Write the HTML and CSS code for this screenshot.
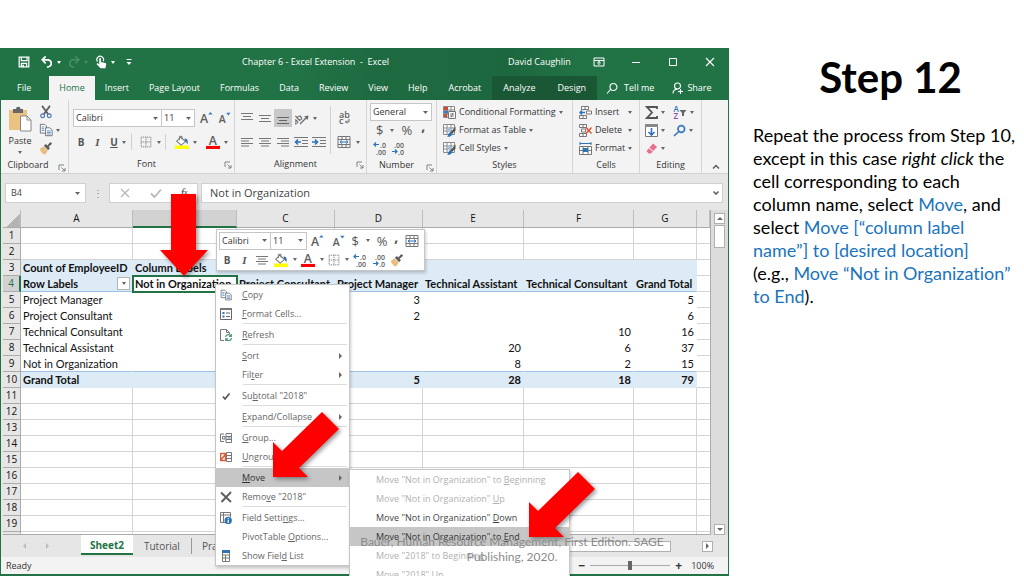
FILE: index.html
```html
<!DOCTYPE html>
<html lang="en">
<head>
<meta charset="utf-8">
<title>Step 12</title>
<link rel="stylesheet" href="styles.css">
</head>
<body>
<svg class="defs" aria-hidden="true">
  <symbol id="save" viewBox="0 0 16 16"><path d="M2.5 2.5h11v11h-11zM5 2.5v4h6.500v-4M5 13.500v-4h6v4" fill="none" stroke="#fff" stroke-width="1.400"/><path d="M6 11h2v3H6z" fill="#fff"/></symbol>
  <symbol id="undo" viewBox="0 0 16 16"><path d="M6.500 1.500L2.500 5.500l4 4M3 5.500h6.500a4 4 0 0 1 1 7.600L8 14" fill="none" stroke="#fff" stroke-width="1.900"/></symbol>
  <symbol id="redo" viewBox="0 0 16 16"><path d="M9.500 1.500l4 4-4 4M13 5.500H6.500a4 4 0 0 0-1 7.600L8 14" fill="none" stroke="#4b8f69" stroke-width="1.700"/></symbol>
  <symbol id="touch" viewBox="0 0 16 16"><path d="M4 7.500a3.800 3.800 0 1 1 6.500-.5" fill="none" stroke="#fff" stroke-width="1.300"/><path d="M6 4.500c0-1.500 2-1.500 2 0V8l5 1.200c1 .3 1 1 .8 2L13 15H7.500L3 10.500c0-1.500 1.500-1.500 3-.2z" fill="#fff"/></symbol>
  <symbol id="custom" viewBox="0 0 8 8"><path d="M1.500 1.500h5" stroke="#fff"/><path d="M1.500 4h5L4 7z" fill="#fff"/></symbol>
  <symbol id="ribbonopt" viewBox="0 0 12 12"><path d="M1 2h10v8H1zM1 4.500h10M6 9V5.500M4.200 7.200L6 5.500l1.800 1.700" fill="none" stroke="#fff"/></symbol>
  <symbol id="min" viewBox="0 0 12 12"><path d="M2 6.500h8" stroke="#fff"/></symbol>
  <symbol id="max" viewBox="0 0 12 12"><path d="M2.500 2.500h7v7h-7z" fill="none" stroke="#fff"/></symbol>
  <symbol id="close" viewBox="0 0 12 12"><path d="M2 2l8 8M10 2l-8 8" stroke="#fff" stroke-width="1.100"/></symbol>
  <symbol id="search" viewBox="0 0 12 12"><path d="M1 11.500L4.500 7.500M4 5a3.500 3.500 0 1 1 7 0a3.500 3.500 0 1 1-7 0" fill="none" stroke="#fff" stroke-width="1.100"/></symbol>
  <symbol id="person" viewBox="0 0 12 12"><path d="M2.500 4a3 3 0 1 1 6 0a3 3 0 1 1-6 0M1 11.500c0-3 2-4.300 4.500-4.300M6 9.500h5M8.500 7v5" fill="none" stroke="#fff" stroke-width="1.100"/></symbol>

  <symbol id="paste" viewBox="0 0 24 26"><path d="M1 4h18v20H1z" fill="#eac282"/><path d="M5 3h3a2 2 0 0 1 4.500 0H15v4H5z" fill="#666"/><path d="M12.500 10h6.500l4 4v11h-10.500z" fill="#fff" stroke="#888"/><path d="M19 10v4h4" fill="none" stroke="#888"/></symbol>
  <symbol id="cut" viewBox="0 0 16 16"><path d="M3.500 1l7 9.500M12.500 1l-7 9.500" stroke="#5e5e5e" stroke-width="2"/><path d="M2 12.300a2.200 2.200 0 1 1 4.400 0a2.200 2.200 0 1 1-4.400 0M9.500 12.300a2.200 2.200 0 1 1 4.400 0a2.200 2.200 0 1 1-4.400 0" fill="none" stroke="#4472b0" stroke-width="1.300"/></symbol>
  <symbol id="copy" viewBox="0 0 16 16"><path d="M1.500 1.500h5l2 2v8h-7z" fill="#fff" stroke="#666"/><path d="M7.500 5.500h5l2.500 2.500v6.500H7.500z" fill="#fff" stroke="#666"/><path d="M3 4.500h3M3 6.500h3M3 8.500h3M9 9h4.500M9 10.800h4.500M9 12.600h4.500" stroke="#4a83bd"/></symbol>
  <symbol id="painter" viewBox="0 0 16 16"><path d="M1 9l4-3 5 5-3 4.500c-2 0-5-2.500-6-6.500z" fill="#e9bd7c"/><path d="M5.500 5.500L8 3.500l1.500 1.500L13 1l2 2-4 3.500L12.500 8l-2 2.500z" fill="#5e5e5e"/></symbol>
  <symbol id="grow" viewBox="0 0 16 16"><text x="1" y="14" class="glyph" font-size="14">A</text><path d="M10.500 4h5L13 1z" fill="#3b78bd"/></symbol>
  <symbol id="shrink" viewBox="0 0 16 16"><text x="2" y="14" class="glyph" font-size="12">A</text><path d="M10.500 2h5L13 5z" fill="#3b78bd"/></symbol>
  <symbol id="borders" viewBox="0 0 16 16"><path d="M1.500 1.500h13v13h-13zM8 1.500v13M1.500 8h13" fill="none" stroke="#777" stroke-width="1.200" stroke-dasharray="1.500 1"/></symbol>
  <symbol id="fill" viewBox="0 0 16 16"><path d="M0 12h16v4H0z" fill="#ff0"/><path d="M6.500 2.500l5.500 5-5 4-5-4.500z" fill="#fff" stroke="#777" stroke-width="1.200"/><path d="M5 6V1.500h3V5" fill="none" stroke="#777"/><path d="M11 4c3 0 4 2 3.500 6-2 0-1.500-3-3.500-4z" fill="#3f6fa8"/></symbol>
  <symbol id="fcolor" viewBox="0 0 16 16"><path d="M0 12.500h16V16H0z" fill="#f00"/><text x="3.200" y="11.500" class="glyph" font-size="14">A</text></symbol>
  <symbol id="atop" viewBox="0 0 12 12"><path d="M0 1.500h12M2 4.500h8M0 7.500h12" stroke="#777"/></symbol>
  <symbol id="amid" viewBox="0 0 12 12"><path d="M0 3.500h12M2 6.500h8M0 9.500h12" stroke="#777"/></symbol>
  <symbol id="abot" viewBox="0 0 12 12"><path d="M0 5.500h12M2 8.500h8M0 11.500h12" stroke="#666"/></symbol>
  <symbol id="aleft" viewBox="0 0 12 12"><path d="M0 2.500h12M0 5h8M0 7.500h12M0 10h8" stroke="#777"/></symbol>
  <symbol id="acen" viewBox="0 0 12 12"><path d="M0 2.500h12M2 5h8M0 7.500h12M2 10h8" stroke="#777"/></symbol>
  <symbol id="aright" viewBox="0 0 12 12"><path d="M0 2.500h12M4 5h8M0 7.500h12M4 10h8" stroke="#777"/></symbol>
  <symbol id="orient" viewBox="0 0 14 14"><text x="-3" y="10" transform="rotate(-42 4 8)" class="glyph" font-size="9">ab</text><path d="M5 13l8-8M13 5l-3.500 1M13 5l-1 3.500" fill="none" stroke="#666" stroke-width="1.200"/></symbol>
  <symbol id="outdent" viewBox="0 0 14 12"><path d="M0 1.500h14M8 4.500h6M8 7.500h6M0 10.500h14" stroke="#777"/><path d="M7 6H1.500M4 3.500L1.500 6 4 8.500" fill="none" stroke="#2f73b7" stroke-width="1.600"/></symbol>
  <symbol id="indent" viewBox="0 0 14 12"><path d="M0 1.500h14M8 4.500h6M8 7.500h6M0 10.500h14" stroke="#777"/><path d="M0 6h5.500M3 3.500L5.500 6 3 8.500" fill="none" stroke="#2f73b7" stroke-width="1.600"/></symbol>
  <symbol id="wrap" viewBox="0 0 12 14"><text x="1" y="7" class="glyph" font-size="9">ab</text><text x="1" y="13" class="glyph" font-size="9">c</text><path d="M11 8v3H7.500M9 9.500L7.500 11 9 12.500" fill="none" stroke="#666"/></symbol>
  <symbol id="merge" viewBox="0 0 14 14"><path d="M1 1.500h12v11H1zM1 4.500h12M1 9.500h12M5 1.500v3M9 1.500v3M5 9.500v3M9 9.500v3" fill="none" stroke="#777"/><path d="M3 7h8M5 5.500L3 7l2 1.500M9 5.500L11 7 9 8.500" fill="none" stroke="#2f73b7"/></symbol>
  <symbol id="incdec" viewBox="0 0 14 14"><path d="M6 3.500H1M3 1.500l-2 2 2 2" fill="none" stroke="#2f73b7" stroke-width="1.200"/><text x="7" y="6.500" class="glyph" font-size="7">.0</text><text x="3" y="13.500" class="glyph" font-size="7">.00</text></symbol>
  <symbol id="decdec" viewBox="0 0 14 14"><text x="3" y="6.500" class="glyph" font-size="7">.00</text><path d="M1 10.500h5M4 8.500l2 2-2 2" fill="none" stroke="#2f73b7" stroke-width="1.200"/><text x="7" y="13.500" class="glyph" font-size="7">.0</text></symbol>
  <symbol id="cond" viewBox="0 0 13 13"><path d="M.5.5h11v11H.5zM.5 4h11M.5 8h11M4 .5v11M8 .5v11" fill="#fff" stroke="#888"/><path d="M1 1h4v3H1zM1 8h3v3H1z" fill="#d0492f"/><path d="M1 4.500h4v3H1z" fill="#3f77b5"/><path d="M5.500 5.500h7v7h-7z" fill="#fff" stroke="#777"/><path d="M7 8h4M7 10h4M10 7l-2 4.500" stroke="#666" stroke-width=".8"/></symbol>
  <symbol id="tfmt" viewBox="0 0 13 13"><path d="M.5.5h11v10H.5zM.5 4h11M.5 7h11M4 .5v10M8 .5v10" fill="#fff" stroke="#888"/><path d="M4 4.500h4V7H4z" fill="#9dc3e6"/><path d="M12.500 2.500v4L9 10 7.500 8.500z" fill="#555"/><path d="M7.500 8L9.500 10c-1 2.500-3 3-5.500 2.800C5.500 11.500 5 9 7.500 8z" fill="#2f73b7"/></symbol>
  <symbol id="cins" viewBox="0 0 13 13"><path d="M2.500.5h7v3h-7zM.5 9.500h7v3h-7zM6 .5v3M4 9.500v3M7.500 5h5v3h-5z" fill="#fff" stroke="#777"/><path d="M6 6.500H1M3 4.500l-2 2 2 2" fill="none" stroke="#2f73b7" stroke-width="1.500"/></symbol>
  <symbol id="cdel" viewBox="0 0 13 13"><path d="M.5.5h7v3h-7zM.5 9.500h7v3h-7zM4 .5v3M4 9.500v3M2.500 5h4v3h-4z" fill="#fff" stroke="#777"/><path d="M7 3.500l5.500 6M12.500 3.500L7 9.500" stroke="#dc5032" stroke-width="1.500"/></symbol>
  <symbol id="cfmt" viewBox="0 0 13 13"><path d="M1 0v3M12 0v3M1 1.500h11" stroke="#2f73b7"/><path d="M.5 4.500h12v8H.5zM.5 8.500h12M4 4.500v8M9 4.500v8" fill="#fff" stroke="#777"/><path d="M4 6h5v4H4z" fill="#2f73b7"/></symbol>
  <symbol id="sum" viewBox="0 0 13 13"><path d="M12 3V1H2l5 5.500L2 12h10v-2" fill="none" stroke="#555" stroke-width="1.800"/></symbol>
  <symbol id="sortf" viewBox="0 0 13 14"><text x="0" y="7" font-size="8" class="glyph blue">A</text><text x="0" y="14" font-size="8" class="glyph purple">Z</text><path d="M6 5h7l-2.500 3v3h-2V8z" fill="#666"/></symbol>
  <symbol id="filld" viewBox="0 0 13 13"><path d="M.5.5h12v12H.5z" fill="#fff" stroke="#777"/><path d="M0 0h13v3H0z" fill="#888"/><path d="M6.500 4v7M3.500 8l3 3 3-3" fill="none" stroke="#2f73b7" stroke-width="1.600"/></symbol>
  <symbol id="find" viewBox="0 0 13 13"><path d="M5 5a3.300 3.300 0 1 1 6.600 0a3.300 3.300 0 1 1-6.600 0M5.800 7.500L1 12" fill="none" stroke="#3b78bd" stroke-width="1.700"/></symbol>
  <symbol id="erase" viewBox="0 0 13 13"><path d="M8 1.500L12 5 6 11.500H3.500L1.500 9z" fill="#e8708c"/><path d="M4 6l4.500 3.500" stroke="#fff"/></symbol>
  <symbol id="launch" viewBox="0 0 8 8"><path d="M1 6V1h5M3.500 3.500L7 7M7 4v3H4" fill="none" stroke="#777" stroke-width=".9"/></symbol>
  <symbol id="up" viewBox="0 0 8 8"><path d="M1 5.500l3-3 3 3" fill="none" stroke="#555" stroke-width="1.400"/></symbol>
  <symbol id="down" viewBox="0 0 8 8"><path d="M1.500 2.500L4 5l2.500-2.500" fill="none" stroke="#666" stroke-width="1.700"/></symbol>
  <symbol id="xgray" viewBox="0 0 12 12"><path d="M2 2l8 8M10 2l-8 8" stroke="#b8b8b8" stroke-width="1.400"/></symbol>
  <symbol id="ckgray" viewBox="0 0 12 12"><path d="M1 6.500L4.500 10 11 2.500" fill="none" stroke="#b8b8b8" stroke-width="1.800"/></symbol>
  <symbol id="check" viewBox="0 0 12 12"><path d="M3 6.500L5 9l4.500-5.500" fill="none" stroke="#555" stroke-width="1.700"/></symbol>
  <symbol id="dlg" viewBox="0 0 12 12"><path d="M.5.500h11v11H.5z" fill="#fff" stroke="#666"/><path d="M0 0h12v2H0z" fill="#777"/><path d="M2.500 5h2M2.500 8.500h2" stroke="#2f73b7" stroke-width="2"/><path d="M6 5h4M6 8.500h4" stroke="#666"/></symbol>
  <symbol id="refresh" viewBox="0 0 12 12"><path d="M4 11.500H.5V.500h6l3 3V5M6.500.500v3h3" fill="none" stroke="#777"/><path d="M5.500 8a3 3 0 0 1 5.500-1M11.500 9a3 3 0 0 1-5.500 1.300M11.300 5v2.300H9M5.700 12V9.800H8" fill="none" stroke="#4f9a72" stroke-width="1.200"/></symbol>
  <symbol id="group" viewBox="0 0 12 12"><path d="M4 2H.5v7.500H4M6 1.500h5.500v9H6zM6 4.500h5.500M6 7.500h5.500" fill="#fff" stroke="#777"/><path d="M2.500 4.500h2.500v2.500H2.500z" fill="#fff" stroke="#777"/><path d="M7.500 6h3" stroke="#2f73b7"/></symbol>
  <symbol id="ungroup" viewBox="0 0 12 12"><path d="M6.500 1.500h5v9h-5zM6.500 4.500h5M6.500 7.500h5" fill="#fff" stroke="#777"/><path d="M.7 2.500h4.800v7H.7zM1 9l4.500-6" fill="#fff" stroke="#d8603d" stroke-width="1.400"/></symbol>
  <symbol id="remove" viewBox="0 0 12 12"><path d="M1 1.500l10 9.500M11 1L1.500 11" stroke="#5e5e5e" stroke-width="1.900"/></symbol>
  <symbol id="fset" viewBox="0 0 12 12"><path d="M5 10.500H.5V.500h10V5M.5 3h10M3.500 .5v10" fill="#fff" stroke="#777"/><path d="M4.500 8.500a3.700 3.700 0 1 1 7.400 0a3.700 3.700 0 1 1-7.400 0" fill="#2f73b7"/><path d="M8.200 6v1.200M8.200 8v3" stroke="#fff" stroke-width="1.200"/></symbol>
  <symbol id="flist" viewBox="0 0 12 12"><path d="M2.500.500h7v11h-7zM2.500 5h7M2.500 8h7M5.500 5v6" fill="#fff" stroke="#777"/><path d="M2 0h8v3H2z" fill="#2f73b7"/></symbol>
</svg>

<div class="slide">
  <section class="excel">
    <header class="head">
      <div class="titlebar">
        <div class="quick">
          <button aria-label="Save"><svg class="i14"><use href="#save"/></svg></button>
          <button aria-label="Undo"><svg class="i14"><use href="#undo"/></svg><i class="caret light"></i></button>
          <button aria-label="Redo"><svg class="i14"><use href="#redo"/></svg><i class="caret dim"></i></button>
          <button aria-label="Touch mode"><svg class="i14"><use href="#touch"/></svg><i class="caret light"></i></button>
          <button aria-label="Customize"><svg class="i8"><use href="#custom"/></svg></button>
        </div>
        <div class="doc">Chapter 6 - Excel Extension&nbsp; -&nbsp; Excel</div>
        <div class="user">David Caughlin</div>
        <div class="wins">
          <button aria-label="Ribbon options"><svg class="i12"><use href="#ribbonopt"/></svg></button>
          <button aria-label="Minimize"><svg class="i12"><use href="#min"/></svg></button>
          <button aria-label="Maximize"><svg class="i12"><use href="#max"/></svg></button>
          <button aria-label="Close"><svg class="i12"><use href="#close"/></svg></button>
        </div>
      </div>
      <nav class="tabs">
        <button class="file">File</button><button class="on">Home</button><button>Insert</button><button>Page Layout</button><button>Formulas</button><button>Data</button><button>Review</button><button>View</button><button>Help</button><button class="loose">Acrobat</button><span class="context"><button class="loose">Analyze</button><button class="loose">Design</button></span>
        <button class="tell"><svg class="i12"><use href="#search"/></svg>Tell me</button>
        <button class="share"><svg class="i12"><use href="#person"/></svg>Share</button>
      </nav>
    </header>

    <div class="ribbon">
      <div class="grp clip">
        <div class="body cols">
          <button class="big"><svg class="pasteicon"><use href="#paste"/></svg>Paste<i class="caret"></i></button>
          <div class="three">
            <button aria-label="Cut"><svg class="i14"><use href="#cut"/></svg></button>
            <button aria-label="Copy"><svg class="i14"><use href="#copy"/></svg><i class="caret"></i></button>
            <button aria-label="Format Painter"><svg class="i14"><use href="#painter"/></svg></button>
          </div>
        </div>
        <div class="label">Clipboard<svg class="i8"><use href="#launch"/></svg></div>
      </div>
      <div class="grp font">
        <div class="body two">
          <div class="row">
            <div class="joined"><select class="name" aria-label="Font"><option>Calibri</option></select><select class="size" aria-label="Font size"><option>11</option></select></div>
            <button aria-label="Grow font"><svg class="i14"><use href="#grow"/></svg></button>
            <button aria-label="Shrink font"><svg class="i14"><use href="#shrink"/></svg></button>
          </div>
          <div class="row spread">
            <button class="b">B</button><button class="it">I</button><button class="un">U</button><i class="caret"></i><i class="bar"></i>
            <button aria-label="Borders"><svg class="i12"><use href="#borders"/></svg></button><i class="caret"></i><i class="bar"></i>
            <button aria-label="Fill color"><svg class="i14"><use href="#fill"/></svg></button><i class="caret"></i>
            <button aria-label="Font color"><svg class="i14"><use href="#fcolor"/></svg></button><i class="caret"></i>
          </div>
        </div>
        <div class="label launched">Font<svg class="i8"><use href="#launch"/></svg></div>
      </div>
      <div class="grp align">
        <div class="body cols">
          <div class="agrid">
            <button aria-label="Top"><svg class="i12"><use href="#atop"/></svg></button>
            <button aria-label="Middle"><svg class="i12"><use href="#amid"/></svg></button>
            <button aria-label="Bottom" class="sel"><svg class="i12"><use href="#abot"/></svg></button>
            <button aria-label="Orientation" class="wide"><svg class="i14"><use href="#orient"/></svg><i class="caret"></i></button>
            <button aria-label="Left"><svg class="i12"><use href="#aleft"/></svg></button>
            <button aria-label="Center"><svg class="i12"><use href="#acen"/></svg></button>
            <button aria-label="Right"><svg class="i12"><use href="#aright"/></svg></button>
            <button aria-label="Decrease indent"><svg class="i14"><use href="#outdent"/></svg></button>
            <button aria-label="Increase indent"><svg class="i14"><use href="#indent"/></svg></button>
          </div>
          <div class="wrapcol">
            <button aria-label="Wrap text"><svg class="i14"><use href="#wrap"/></svg></button>
            <button aria-label="Merge"><svg class="i14"><use href="#merge"/></svg><i class="caret"></i></button>
          </div>
        </div>
        <div class="label launched">Alignment<svg class="i8"><use href="#launch"/></svg></div>
      </div>
      <div class="grp number">
        <div class="body three">
          <select class="general" aria-label="Number format"><option>General</option></select>
          <div class="row nums"><button class="sym">$</button><i class="caret"></i><button class="sym">%</button><button class="comma">,</button></div>
          <div class="row nums decs"><button aria-label="Increase decimal"><svg class="i14"><use href="#incdec"/></svg></button><button aria-label="Decrease decimal"><svg class="i14"><use href="#decdec"/></svg></button></div>
        </div>
        <div class="label launched">Number<svg class="i8"><use href="#launch"/></svg></div>
      </div>
      <div class="grp styles">
        <div class="body three">
          <button><svg class="i13"><use href="#cond"/></svg>Conditional Formatting<i class="caret"></i></button>
          <button><svg class="i13"><use href="#tfmt"/></svg>Format as Table<i class="caret"></i></button>
          <button><svg class="i13"><use href="#tfmt"/></svg>Cell Styles<i class="caret"></i></button>
        </div>
        <div class="label">Styles</div>
      </div>
      <div class="grp cells">
        <div class="body three">
          <button><svg class="i13"><use href="#cins"/></svg>Insert<i class="caret end"></i></button>
          <button><svg class="i13"><use href="#cdel"/></svg>Delete<i class="caret end"></i></button>
          <button><svg class="i13"><use href="#cfmt"/></svg>Format<i class="caret end"></i></button>
        </div>
        <div class="label">Cells</div>
      </div>
      <div class="grp editing">
        <div class="body egrid">
          <button aria-label="Sum"><svg class="i13"><use href="#sum"/></svg><i class="caret"></i></button>
          <button aria-label="Sort"><svg class="i14"><use href="#sortf"/></svg><i class="caret"></i></button>
          <button aria-label="Fill"><svg class="i13"><use href="#filld"/></svg><i class="caret"></i></button>
          <button aria-label="Find"><svg class="i13"><use href="#find"/></svg><i class="caret"></i></button>
          <button aria-label="Clear"><svg class="i13"><use href="#erase"/></svg><i class="caret"></i></button>
        </div>
        <div class="label">Editing</div>
      </div>
      <button class="collapse" aria-label="Collapse"><svg class="i8"><use href="#up"/></svg></button>
    </div>

    <div class="formula">
      <select class="namebox" aria-label="Name box"><option>B4</option></select>
      <span class="dots">⋮</span>
      <div class="fx"><button aria-label="Cancel"><svg class="i12"><use href="#xgray"/></svg></button><button aria-label="Enter"><svg class="i12"><use href="#ckgray"/></svg></button><button class="f">f<sub>x</sub></button></div>
      <label class="value"><input aria-label="Formula" value="Not in Organization"><svg class="i8"><use href="#down"/></svg></label>
    </div>

    <div class="sheet">
      <div class="view">
        <table>
          <colgroup><col class="c0"><col class="ca"><col class="cb"><col class="cc"><col class="cd"><col class="ce"><col class="cf"><col class="cg"><col></colgroup>
          <thead><tr><th class="corner"></th><th>A</th><th class="act"></th><th>C</th><th>D</th><th>E</th><th>F</th><th>G</th><th></th></tr></thead>
          <tbody>
            <tr><th>1</th><td></td><td></td><td></td><td></td><td></td><td></td><td></td><td></td></tr>
            <tr><th>2</th><td></td><td></td><td></td><td></td><td></td><td></td><td></td><td></td></tr>
            <tr class="hd"><th>3</th><td>Count of EmployeeID</td><td>Column Labels</td><td></td><td></td><td></td><td></td><td></td><td></td></tr>
            <tr class="hd line"><th class="act">4</th><td><span class="lab">Row Labels<button aria-label="Filter rows"><i class="caret"></i></button></span></td><td class="cur">Not in Organization</td><td>Project Consultant</td><td>Project Manager</td><td>Technical Assistant</td><td>Technical Consultant</td><td>Grand Total</td><td></td></tr>
            <tr class="pv"><th>5</th><td>Project Manager</td><td></td><td></td><td>3</td><td></td><td></td><td>5</td><td></td></tr>
            <tr class="pv"><th>6</th><td>Project Consultant</td><td></td><td></td><td>2</td><td></td><td></td><td>6</td><td></td></tr>
            <tr class="pv"><th>7</th><td>Technical Consultant</td><td></td><td></td><td></td><td></td><td>10</td><td>16</td><td></td></tr>
            <tr class="pv"><th>8</th><td>Technical Assistant</td><td></td><td></td><td></td><td>20</td><td>6</td><td>37</td><td></td></tr>
            <tr class="pv last"><th>9</th><td>Not in Organization</td><td></td><td></td><td></td><td>8</td><td>2</td><td>15</td><td></td></tr>
            <tr class="hd pv"><th>10</th><td>Grand Total</td><td></td><td></td><td>5</td><td>28</td><td>18</td><td>79</td><td></td></tr>
            <tr><th>11</th><td></td><td></td><td></td><td></td><td></td><td></td><td></td><td></td></tr>
            <tr><th>12</th><td></td><td></td><td></td><td></td><td></td><td></td><td></td><td></td></tr>
            <tr><th>13</th><td></td><td></td><td></td><td></td><td></td><td></td><td></td><td></td></tr>
            <tr><th>14</th><td></td><td></td><td></td><td></td><td></td><td></td><td></td><td></td></tr>
            <tr><th>15</th><td></td><td></td><td></td><td></td><td></td><td></td><td></td><td></td></tr>
            <tr><th>16</th><td></td><td></td><td></td><td></td><td></td><td></td><td></td><td></td></tr>
            <tr><th>17</th><td></td><td></td><td></td><td></td><td></td><td></td><td></td><td></td></tr>
            <tr><th>18</th><td></td><td></td><td></td><td></td><td></td><td></td><td></td><td></td></tr>
            <tr><th>19</th><td></td><td></td><td></td><td></td><td></td><td></td><td></td><td></td></tr>
            <tr><th></th><td></td><td></td><td></td><td></td><td></td><td></td><td></td><td></td></tr>
          </tbody>
        </table>
      </div>
      <div class="vscroll"><button aria-label="Scroll up"><i class="tri u"></i></button><div class="thumb"></div><button class="bottom" aria-label="Scroll down"><i class="tri d"></i></button></div>
    </div>

    <div class="sheets">
      <span class="arrows"><i class="tri l"></i><i class="tri r"></i></span>
      <button class="on">Sheet2</button><button>Tutorial</button><button class="split">Practice</button>
      <div class="hscroll"><div class="hthumb"></div><button aria-label="Scroll right"><i class="tri r"></i></button></div>
    </div>
    <footer class="status"><span>Ready</span><span class="zoom"><i class="bracket"></i><b>−</b><input type="range" aria-label="Zoom" value="50"><b>+</b><span>100%</span></span></footer>

    <div class="mini">
      <div class="row">
        <div class="joined"><select class="name" aria-label="Font"><option>Calibri</option></select><select class="size" aria-label="Font size"><option>11</option></select></div>
        <div class="row fillrow">
        <button aria-label="Grow font"><svg class="i14"><use href="#grow"/></svg></button><button aria-label="Shrink font"><svg class="i14"><use href="#shrink"/></svg></button>
        <button class="sym">$</button><i class="caret"></i><button class="sym">%</button><button class="comma">,</button><button aria-label="Merge"><svg class="i14"><use href="#merge"/></svg></button>
        </div>
      </div>
      <div class="row second">
        <button class="b">B</button><button class="it">I</button><button class="center" aria-label="Center"><svg class="i12"><use href="#acen"/></svg></button>
        <button aria-label="Fill color"><svg class="i14"><use href="#fill"/></svg></button><i class="caret"></i><button aria-label="Font color"><svg class="i14"><use href="#fcolor"/></svg></button><i class="caret"></i><button aria-label="Borders"><svg class="i12"><use href="#borders"/></svg></button><i class="caret"></i>
        <button aria-label="Increase decimal"><svg class="i14"><use href="#incdec"/></svg></button><button aria-label="Decrease decimal"><svg class="i14"><use href="#decdec"/></svg></button><button aria-label="Format Painter"><svg class="i14"><use href="#painter"/></svg></button>
      </div>
    </div>

    <ul class="menu">
      <li><svg class="i12"><use href="#copy"/></svg><span><u>C</u>opy</span></li>
      <li class="sep"><svg class="i12"><use href="#dlg"/></svg><span><u>F</u>ormat Cells...</span></li>
      <li class="sep"><svg class="i12"><use href="#refresh"/></svg><span><u>R</u>efresh</span></li>
      <li><i></i><span><u>S</u>ort</span><i class="tri r"></i></li>
      <li class="sep"><i></i><span>Fil<u>t</u>er</span><i class="tri r"></i></li>
      <li class="sep"><svg class="i12"><use href="#check"/></svg><span>Su<u>b</u>total "2018"</span></li>
      <li class="sep"><i></i><span><u>E</u>xpand/Collapse</span><i class="tri r"></i></li>
      <li><svg class="i12"><use href="#group"/></svg><span><u>G</u>roup...</span></li>
      <li class="sep"><svg class="i12"><use href="#ungroup"/></svg><span><u>U</u>ngroup...</span></li>
      <li class="hot"><i></i><span><u>M</u>ove</span><i class="tri r"></i>
        <ul class="sub">
          <li class="off">Move "Not in Organization" to <u>B</u>eginning</li>
          <li class="off">Move "Not in Organization" <u>U</u>p</li>
          <li>Move "Not in Organization" <u>D</u>own</li>
          <li class="hot">Move "Not in Organization" to <u>E</u>nd</li>
          <li class="off">Move "2018" to Beginning</li>
          <li class="off">Move "2018" Up</li>
        </ul>
      </li>
      <li class="sep"><svg class="i12"><use href="#remove"/></svg><span>Remo<u>v</u>e "2018"</span></li>
      <li><svg class="i12"><use href="#fset"/></svg><span>Field Setti<u>n</u>gs...</span></li>
      <li><i></i><span>PivotTable <u>O</u>ptions...</span></li>
      <li><svg class="i12"><use href="#flist"/></svg><span>Show Fiel<u>d</u> List</span></li>
    </ul>

    <svg class="arrow a1" viewBox="0 0 48 82"><path d="M11 0h25v56h12L24 82 0 56h11z"/></svg>
    <svg class="arrow a2" viewBox="0 0 66 66"><path d="M0 65V30l9 9L49 0l17 17-40 39 9 9z"/></svg>
    <svg class="arrow a3" viewBox="0 0 66 66"><path d="M0 65V30l9 9L49 0l17 17-40 39 9 9z"/></svg>
  </section>

  <aside class="text">
    <h1>Step 12</h1>
    <p>Repeat the process from Step 10,<br>except in this case <em>right click</em> the<br>cell corresponding to each<br>column name, select <b>Move</b>, and<br>select <b>Move [“column label<br>name”] to [desired location]</b><br>(e.g., <b>Move “Not in Organization”<br>to End</b>).</p>
  </aside>
  <p class="cite">Bauer, Human Resource Management, First Edition. SAGE<br>Publishing, 2020.</p>
</div>
</body>
</html>
```
FILE: styles.css
```css
* { box-sizing: border-box; }
body { margin: 0; background: #fff; font: 9px/14px "Open Sans", "Noto Sans", sans-serif; font-variant-ligatures: none; color: #333; overflow: hidden; }
.defs { position: absolute; width: 0; height: 0; }
button, select, input { font: inherit; color: inherit; border: 0; background: none; padding: 0; margin: 0; border-radius: 0; }
button { display: inline-flex; align-items: center; justify-content: center; }
svg { display: block; flex: none; }
.i8 { width: 8px; height: 8px; }
.i12 { width: 12px; height: 12px; }
.i13 { width: 13px; height: 13px; }
.i14 { width: 14px; height: 14px; }
.pasteicon { width: 24px; height: 26px; }
.glyph { font-family: "Open Sans", sans-serif; font-weight: 600; fill: #5e5e5e; }
.glyph.blue { fill: #2f73b7; }
.glyph.purple { fill: #8c4fa8; }
.caret { display: inline-block; flex: none; border: 2px solid transparent; border-top: 3px solid #666; border-bottom: 0; }
.caret.light { border-top-color: #fff; }
.caret.dim { border-top-color: #4b8f69; }
.tri { flex: none; border: 3px solid transparent; }
.tri.u { border-bottom-color: #666; border-top: 0; }
.tri.d { border-top-color: #666; border-bottom: 0; }
.tri.l { border-right-color: #bbb; border-left: 0; }
.tri.r { border-left-color: #666; border-right: 0; }
.row { display: flex; align-items: center; }

.slide { position: relative; display: flex; height: 100vh; padding-top: 48px; }
.excel { position: relative; flex: 0 0 71.2%; min-width: 0; display: flex; flex-direction: column; border: 1px solid #217346; border-top: 0; border-bottom-width: 2px; background: #e6e6e6; }

.head { background: linear-gradient(90deg, #217346 40%, #1e6a40 52%, #1d673e 70%, #217346 80%); color: #fff; }
.titlebar { display: grid; grid-template-columns: 150px 1fr 110px 147px; align-items: center; height: 28px; }
.quick { display: flex; align-items: center; gap: 6px; padding-left: 16px; }
.quick button { gap: 3px; }
.quick button:first-child { margin-right: 3px; }
.quick button:last-child { margin-left: 4px; }
.doc { padding-left: 91px; white-space: nowrap; }
.user { white-space: nowrap; padding-left: 37px; }
.wins { display: flex; justify-content: space-between; padding: 0 12px; }
.tabs { display: flex; height: 24px; }
.tabs button { padding: 0 10px; white-space: nowrap; }
.tabs .file { padding: 0 18px 0 16px; }
.tabs .loose { padding: 0 11px; }
.tabs .on { background: #f3f3f3; color: #217346; }
.context { display: flex; background: #1a5735; }
.tabs .tell, .tabs .share { gap: 6px; padding: 0 9px; }
.tabs .share { gap: 3px; }

.ribbon { display: flex; background: #f3f3f3; height: 74px; border-bottom: 1px solid #d2d2d2; white-space: nowrap; }
.grp { display: flex; flex-direction: column; flex: none; padding-top: 3px; border-right: 1px solid #d5d5d5; }
.body { height: 54px; }
.label { display: flex; align-items: center; justify-content: center; height: 20px; position: relative; }
.label svg { position: absolute; right: 2px; top: 7px; }
.cols { display: flex; }
.three { display: grid; grid-template-rows: repeat(3, 18px); align-items: center; }
.two { display: flex; flex-direction: column; padding-top: 3px; }
.two .row { height: 24px; }
.clip { width: 68px; }
.clip .body { padding-left: 7px; gap: 7px; }
.clip .label { padding-right: 13px; }
.launched { padding-right: 10px; }
.big { flex-direction: column; gap: 2px; width: 24px; }
.big .caret { margin-top: 1px; }
.clip .three button { gap: 3px; justify-content: flex-start; }
.font { width: 166px; }
.font .body { padding-left: 4px; }
.joined { display: flex; border: 1px solid #c6c6c6; background: #fff; }
select { appearance: none; background: #fff url("data:image/svg+xml,%3Csvg xmlns='http://www.w3.org/2000/svg' width='5' height='3'%3E%3Cpath d='M0 0h5L2.500 3z' fill='%23666'/%3E%3C/svg%3E") no-repeat right 3px center; padding-left: 2px; height: 16px; }
.name { width: 87px; }
.size { width: 33px; border-left: 1px solid #c6c6c6; }
.font .row button { margin-left: 4px; }
.spread { justify-content: space-between; padding: 0 6px 0 0; }
.b, .it, .un { min-width: 8px; color: #555; }
.b { font-size: 10px; font-weight: 700; }
.it { font: italic 700 11px/14px "Liberation Serif", serif; }
.un { font-size: 10px; font-weight: 700; text-decoration: underline; }
.bar { width: 1px; height: 16px; background: #d0d0d0; }
.align { width: 132px; }
.align .body { padding: 3px 0 0 3px; }
.agrid { display: grid; grid-template: 24px 24px / repeat(5, 18px); border-right: 1px solid #d0d0d0; padding-right: 2px; }
.agrid .wide { grid-column: span 2; gap: 4px; justify-content: flex-start; padding-left: 3px; }
.agrid .sel { background: #c8c8c8; height: 18px; align-self: center; }
.wrapcol { display: grid; grid-template-rows: 24px 24px; flex: 1; justify-items: start; padding-left: 6px; }
.wrapcol button { gap: 5px; }
.number { width: 70px; }
.number .body { padding-left: 3px; }
.general { width: 62px; height: 18px; border: 1px solid #c6c6c6; }
.nums { gap: 7px; padding-left: 6px; }
.nums .comma { margin-left: 2px; }
.decs { gap: 4px; padding-left: 3px; }
.sym { font-size: 13px; color: #555; }
.comma { font-size: 14px; font-weight: 700; color: #555; height: 18px; padding-bottom: 8px; }
.styles { width: 136px; }
.styles .body, .cells .body { padding-left: 6px; }
.styles button, .cells button { gap: 3px; justify-content: flex-start; }
.cells { width: 67px; }
.cells .end { margin-left: auto; margin-right: 8px; }
.editing { width: 62px; }
.egrid { display: grid; grid-template: repeat(3, 18px) / 28px 28px; padding-left: 5px; }
.egrid button { gap: 3px; justify-content: flex-start; }
.collapse { margin: auto 8px 2px auto; }

.formula { display: flex; align-items: stretch; height: 36px; padding: 9px 5px 7px 4px; color: #444; }
.namebox { width: 81px; height: 20px; padding-left: 5px; border: 1px solid #d0d0d0; background-position: right 5px center; }
.dots { width: 23px; text-align: center; color: #888; font-size: 10px; line-height: 20px; }
.fx { display: flex; align-items: center; justify-content: space-around; width: 89px; background: #fff; border: 1px solid #d0d0d0; }
.f { font: italic 12px/14px "Liberation Serif", serif; }
.f sub { font-size: 8px; }
.value { display: flex; flex: 1; align-items: center; margin-left: 3px; padding: 0 2px 0 8px; background: #fff; border: 1px solid #d0d0d0; }
.value input { flex: 1; min-width: 0; font-size: 11px; }

.sheet { display: flex; flex: 1; min-height: 0; padding-left: 2px; }
.view { flex: 1; min-width: 0; overflow: hidden; border-bottom: 1px solid #ababab; border-right: 1px solid #ababab; }
table { width: 100%; table-layout: fixed; border-collapse: separate; border-spacing: 0; background: #fff; font: 11px/15px Lato, sans-serif; color: #111; }
.c0 { width: 18px; } .ca { width: 112px; } .cb { width: 104px; } .cc { width: 98px; } .cd { width: 88px; } .ce { width: 101px; } .cf { width: 110px; } .cg { width: 63px; }
td, th { height: 16px; padding: 0 2px; white-space: nowrap; border-right: 1px solid #d4d4d4; border-bottom: 1px solid #d4d4d4; font-weight: 400; }
th { background: #e6e6e6; border-color: #ababab; font: 10px/15px "Open Sans", sans-serif; padding: 0; }
thead th { height: 18px; border-right-color: #bdbdbd; }
thead .act { background: #d2d2d2; border-bottom: 2px solid #217346; }
tbody .act { color: #217346; background: #d2d2d2; border-right: 2px solid #217346; }
.corner { background: linear-gradient(135deg, #e6e6e6 60%, #b4b4b4 60%); }
.hd td { background: #ddebf7; border-color: #ddebf7; font-weight: 700; }
.pv td { border-color: transparent; text-align: right; }
.pv td:nth-child(2) { text-align: left; }
.line td, .last td { border-bottom-color: #9bc2e6; }
tr td:last-child { background: #fff; border-color: #d4d4d4; border-right: 0; }
.hd .cur { outline: 2px solid #217346; outline-offset: -1px; background: #fff; }
.lab { display: flex; justify-content: space-between; align-items: center; height: 15px; }
.lab button { width: 13px; height: 13px; background: #fff; border: 1px solid #b5b5b5; }
.vscroll { display: flex; flex-direction: column; width: 17px; padding: 3px 3px 0; background: #dcdcdc; }
.vscroll button, .hscroll button { width: 11px; height: 11px; background: #fff; border: 1px solid #b0b0b0; flex: none; }
.thumb { height: 23px; background: #fff; border: 1px solid #b0b0b0; margin-top: 1px; }
.vscroll .bottom { margin-top: auto; }

.sheets { display: flex; height: 22px; padding-left: 2px; color: #555; font-size: 10px; }
.arrows { display: flex; align-items: center; gap: 20px; width: 78px; padding-left: 20px; }
.arrows .tri.r { border-left-color: #bbb; }
.sheets > button { padding: 0 11px; }
.sheets > .on { background: #fff; color: #217346; font-weight: 700; border-bottom: 2px solid #217346; height: 20px; padding: 2px 9px 0; }
.sheets > .split { border-left: 1px solid #999; height: 16px; align-self: center; padding: 0 10px; }
.hscroll { flex: 1; display: flex; align-items: center; justify-content: space-between; padding-right: 15px; }
.hthumb { flex: 0 0 91%; height: 11px; background: #fff; border: 1px solid #b0b0b0; }
.status { display: flex; justify-content: space-between; align-items: center; height: 17px; padding: 0 14px 0 5px; background: #f3f3f3; }
.zoom { display: flex; align-items: center; gap: 5px; }
.bracket { width: 4px; height: 9px; border: 1px solid #777; border-left: 0; margin-right: 8px; }
.zoom b { font-size: 12px; }
.zoom span { margin-left: 4px; }
.zoom input { appearance: none; width: 80px; height: 1px; background: #aaa; }
.zoom input::-webkit-slider-thumb { appearance: none; width: 4px; height: 9px; background: #666; }

.mini { position: absolute; left: 215px; top: 181px; width: 209px; height: 42px; padding: 1px 2px 2px; background: #fff; border: 1px solid #c6c6c6; box-shadow: 1px 2px 3px #0003; }
.mini .row { height: 19px; }
.mini .name { width: 50px; }
.mini .size { width: 36px; }
.mini .fillrow { flex: 1; justify-content: space-between; padding: 0 3px; }
.mini .second { justify-content: space-between; padding: 0 18px 0 4px; }
.mini .it { margin: 0 3px 0 5px; }
.mini .center { margin-right: 2px; }

.menu, .sub { list-style: none; margin: 0; padding: 0; background: #fff; border: 1px solid #c6c6c6; box-shadow: 1px 2px 3px #0003; color: #666; white-space: nowrap; }
.menu { position: absolute; left: 214px; top: 236px; width: 135px; }
.menu > li { position: relative; display: grid; grid-template-columns: 12px 1fr auto; column-gap: 10px; align-items: center; height: 19px; padding: 0 7px 0 4px; }
.menu > .sep { margin-bottom: 2px; }
.menu > .sep::after { content: ""; position: absolute; left: 27px; right: 2px; bottom: -1px; height: 1px; background: #dcdcdc; }
.menu .hot { background: #c6c6c6; color: #333; }
.sub { position: absolute; left: 133px; top: 1px; width: 221px; color: #444; }
.sub li { height: 19px; line-height: 19px; padding-left: 26px; }
.sub .off { color: #b0b0b0; }

.arrow { position: absolute; fill: #f00; filter: drop-shadow(2px 2px 2px #0006); }
.a1 { left: 159px; top: 146px; width: 48px; height: 82px; }
.a2, .a3 { width: 66px; height: 66px; }
.a2 { left: 272px; top: 364px; }
.a3 { left: 528px; top: 424px; }

.text { flex: 1; padding: 0 0 0 24px; font-family: Lato, sans-serif; color: #000; }
.text h1 { margin: 3px 0 0 4px; font-size: 42px; line-height: 52px; text-align: center; }
.text p { margin: 21px 0 0; font-size: 18px; line-height: 23px; white-space: nowrap; }
.text b { font-weight: 400; color: #1a74bd; }
.cite { position: absolute; left: 34%; width: 32%; top: 534px; margin: 0; text-align: center; font: 12px/15px Lato, sans-serif; color: #8b8b8b; white-space: nowrap; }
```
